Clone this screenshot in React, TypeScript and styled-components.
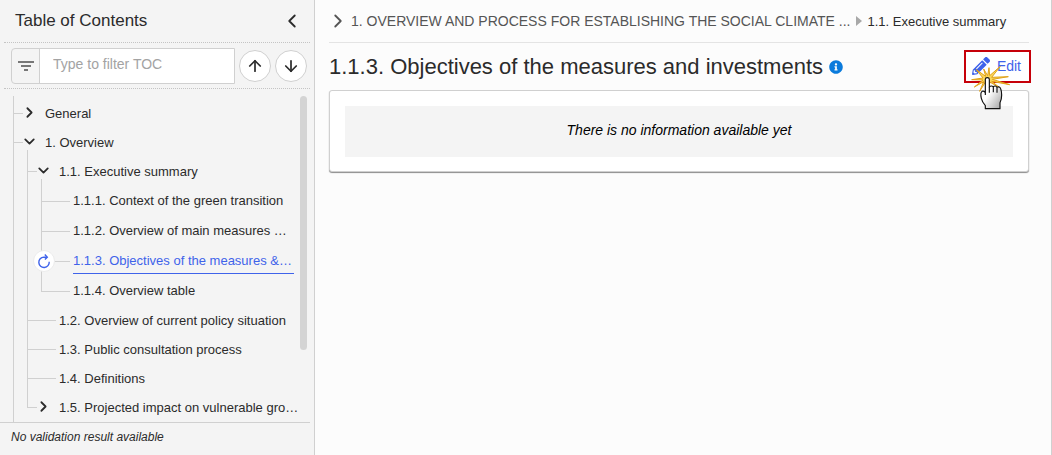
import React from 'react';
import styled, { createGlobalStyle, css } from 'styled-components';
import { ArrowDown, ArrowUp, ChevronDown, ChevronLeft, ChevronRight } from 'lucide-react';
import { FaInfoCircle, FaPencilAlt } from 'react-icons/fa';

const color = {
  text: '#2b2b2b',
  muted: '#555',
  line: '#d0d0d0',
  panel: '#f4f4f4',
  page: '#fcfcfc',
  accent: '#3f63ea',
  info: '#0b7bdc',
  alert: '#c60009',
};

const GlobalStyle = createGlobalStyle`
  *, *::before, *::after { box-sizing: border-box; }
  body {
    margin: 0;
    background: ${color.page};
    color: ${color.text};
    font-family: "Liberation Sans", Arial, sans-serif;
    font-size: 13px;
  }
  button, input { font-family: inherit; color: inherit; }
  a { color: inherit; text-decoration: none; }
`;

const Shell = styled.div`
  display: flex;
  height: 100vh;
  border-right: 1px solid ${color.line};
`;

/* ---------- Sidebar ---------- */

const Sidebar = styled.aside`
  display: flex;
  flex-direction: column;
  flex: 0 0 315px;
  min-width: 0;
  padding-right: 4px;
  background: ${color.panel};
  border-right: 1px solid ${color.line};
`;

const SidebarHeader = styled.header`
  display: flex;
  align-items: center;
  justify-content: space-between;
  height: 43px;
  margin-left: 4px;
  padding: 0 7px 0 11px;
  border-bottom: 1px dotted #c4c4c4;
`;

const SidebarTitle = styled.h2`
  margin: 0;
  font-size: 17px;
  font-weight: 400;
  line-height: 20px;
`;

const IconButton = styled.button`
  display: flex;
  padding: 0;
  border: 0;
  background: none;
`;

const FilterBar = styled.form`
  display: flex;
  align-items: center;
  gap: 4px;
  height: 46px;
  margin-left: 4px;
  padding: 0 3px 0 7px;
  border-bottom: 1px dotted #c4c4c4;
`;

const FilterField = styled.label`
  display: flex;
  flex: 1;
  min-width: 0;
  height: 36px;
  border: 1px solid ${color.line};
  border-radius: 4px 0 0 4px;
`;

const FilterIconBox = styled.span`
  display: flex;
  align-items: center;
  justify-content: center;
  flex: 0 0 28px;
  border-right: 1px solid ${color.line};
`;

const FilterInput = styled.input`
  flex: 1;
  min-width: 0;
  padding: 0 13px 3px;
  border: 0;
  background: #fff;
  font-size: 14px;
  &::placeholder { color: #a3a3a3; opacity: 1; }
`;

const RoundButton = styled.button`
  display: flex;
  align-items: center;
  justify-content: center;
  flex: 0 0 32px;
  height: 32px;
  padding: 0;
  border: 1px solid ${color.line};
  border-radius: 50%;
  background: #fff;
`;

const TreeArea = styled.nav`
  display: flex;
  flex: 1;
  min-height: 0;
  padding: 7px 3px 0 13px;
  border-bottom: 1px solid ${color.line};
`;

const RootBranch = styled.ul`
  flex: 1;
  min-width: 0;
  margin: 0;
  padding: 3px 3px 0 0;
  list-style: none;
  overflow: hidden;
  border-left: 1px solid ${color.line};
`;

const Branch = styled.ul`
  margin: -7px 0 0 13px;
  padding: 7px 0 0 1px;
  list-style: none;
  background: linear-gradient(${color.line}, ${color.line}) no-repeat 0 0 / 1px calc(100% - 14px);
`;

const Row = styled.div<{ $tall: boolean }>`
  position: relative;
  display: flex;
  align-items: center;
  height: ${(p) => (p.$tall ? 30 : 29)}px;
`;

const Connector = styled.span<{ $long: boolean }>`
  flex: 0 0 ${(p) => (p.$long ? 28 : 9)}px;
  height: 1px;
  background: ${color.line};
`;

const Toggle = styled.button`
  display: flex;
  justify-content: center;
  flex: 0 0 12px;
  min-width: 0;
  padding: 0 0 2px;
  border: 0;
  background: none;
  svg { flex: none; }
`;

const RowLink = styled.a<{ $active: boolean; $long: boolean }>`
  flex: 1;
  min-width: 0;
  margin-left: ${(p) => (p.$long ? 3 : 10)}px;
  line-height: 16px;
  white-space: nowrap;
  ${(p) =>
    p.$active &&
    css`
      margin-right: 3px;
      padding: 5px 0 4px;
      border-bottom: 1px solid ${color.accent};
      color: ${color.accent};
    `}
`;

const StatusBadge = styled.span`
  position: absolute;
  top: 4px;
  left: -9px;
  display: flex;
  align-items: center;
  justify-content: center;
  width: 22px;
  height: 22px;
  border: 1px solid #ececec;
  border-radius: 50%;
  background: #fff;
`;

const ScrollTrack = styled.div`
  flex: 0 0 7px;
`;

const ScrollThumb = styled.div`
  height: 78%;
  border-radius: 4px;
  background: #d4d4d4;
`;

const SidebarFooter = styled.footer`
  padding: 7px 11px 10px;
  font-size: 12px;
  font-style: italic;
  line-height: 15px;
`;

/* ---------- Main panel ---------- */

const Main = styled.main`
  flex: 1;
  min-width: 0;
  padding: 0 22px 0 14px;
`;

const Breadcrumb = styled.nav`
  display: flex;
  align-items: center;
  height: 43px;
  border-bottom: 1px solid #e4e4e4;
`;

const CrumbToggle = styled(Toggle)`
  flex-basis: 18px;
  padding: 0;
  color: ${color.muted};
`;

const CrumbParent = styled.a`
  margin: 0 6px 0 4px;
  font-size: 14px;
  color: ${color.muted};
  white-space: nowrap;
`;

const CrumbArrow = styled.svg`
  flex: none;
  margin-right: 4px;
`;

const CrumbCurrent = styled.a`
  white-space: nowrap;
`;

const TitleBar = styled.div`
  display: flex;
  align-items: center;
  gap: 6px;
  height: 47px;
`;

const PageTitle = styled.h1`
  margin: 0;
  font-size: 22px;
  font-weight: 400;
  line-height: 26px;
  white-space: nowrap;
`;

const EditHighlight = styled.div`
  position: relative;
  margin: 0 -2px 0 auto;
  border: 2px solid ${color.alert};
  background: #fff;
`;

const EditButton = styled.button`
  display: flex;
  align-items: center;
  gap: 7px;
  height: 29px;
  padding: 0 8px 1px 6px;
  border: 0;
  background: none;
  font-size: 14px;
  color: ${color.accent};
`;

const Pointer = styled.svg`
  position: absolute;
  top: 13px;
  left: 4px;
  pointer-events: none;
`;

const Card = styled.section`
  padding: 15px 15px 14px;
  border: 1px solid #d0d0d0;
  border-radius: 3px;
  background: #fff;
  box-shadow: 0 1px 1px rgba(0, 0, 0, 0.45);
`;

const EmptyNote = styled.p`
  margin: 0;
  padding: 15px 0 18px;
  background: ${color.panel};
  color: #000;
  font-size: 14px;
  font-style: italic;
  line-height: 18px;
  text-align: center;
`;

/* ---------- Data ---------- */

type Item = {
  label: string;
  open?: boolean;
  closed?: boolean;
  active?: boolean;
  children?: Item[];
};

const items: Item[] = [
  { label: 'General', closed: true },
  {
    label: '1. Overview',
    open: true,
    children: [
      {
        label: '1.1. Executive summary',
        open: true,
        children: [
          { label: '1.1.1. Context of the green transition' },
          { label: '1.1.2. Overview of main measures …' },
          { label: '1.1.3. Objectives of the measures &…', active: true },
          { label: '1.1.4. Overview table' },
        ],
      },
      { label: '1.2. Overview of current policy situation' },
      { label: '1.3. Public consultation process' },
      { label: '1.4. Definitions' },
      { label: '1.5. Projected impact on vulnerable gro…', closed: true },
    ],
  },
];

function TreeItem({ item, depth }: { item: Item; depth: number }) {
  const leaf = !item.open && !item.closed;
  const Chevron = item.open ? ChevronDown : ChevronRight;
  return (
    <li>
      <Row $tall={depth === 2}>
        <Connector $long={leaf} />
        {!leaf && (
          <Toggle type="button" aria-label={`Toggle ${item.label}`} aria-expanded={!!item.open}>
            <Chevron size={17} strokeWidth={2.5} />
          </Toggle>
        )}
        {item.active && (
          <StatusBadge>
            <svg width="14" height="16" viewBox="0 0 14 16" fill="none" stroke={color.accent} strokeWidth="1.4">
              <path d="M12.2 8.8A5.2 5.2 0 1 1 6.8 4.1L9.8 4.2" />
              <path d="M7.8 1.6L10.3 4.2L7.9 6.6" />
            </svg>
          </StatusBadge>
        )}
        <RowLink href="#" $active={!!item.active} $long={leaf}>
          {item.label}
        </RowLink>
      </Row>
      {item.children && (
        <Branch>
          {item.children.map((child) => (
            <TreeItem key={child.label} item={child} depth={depth + 1} />
          ))}
        </Branch>
      )}
    </li>
  );
}

function ClickPointer() {
  return (
    <Pointer width="40" height="45" viewBox="45 60 120 135" aria-hidden="true">
      <defs>
        <linearGradient id="hand" x1="0" y1="0" x2="1" y2="1">
          <stop offset="0.45" stopColor="#fff" />
          <stop offset="1" stopColor="#a0a0a0" />
        </linearGradient>
      </defs>
      <path
        d="M98 92L102 68L104 92L136 64L110 97L160 95L112 103L164 119L110 109L134 128L106 112L98 126L92 110L74 139L86 110L58 126L84 105L50 104L84 99L64 74L92 94L86 72Z"
        fill="#fbd65a"
        stroke="#e0a21a"
        strokeWidth="3"
        strokeLinejoin="round"
      />
      <path
        d="M91 103Q91 98 97 98Q103 98 103 103V127Q107 120 115 125Q121 120 126 127Q134 123 137 131Q140 138 140 150Q140 164 135 173V191H91V182Q82 172 79 160Q75 142 82 139Q86 137 91 143Z"
        fill="url(#hand)"
        stroke="#111"
        strokeWidth="3.5"
        strokeLinejoin="round"
      />
      <path d="M103 127V143M115 126V142M126 128V143M91 143V150" fill="none" stroke="#111" strokeWidth="3.5" />
    </Pointer>
  );
}

export default function App() {
  return (
    <>
      <GlobalStyle />
      <Shell>
        <Sidebar>
          <SidebarHeader>
            <SidebarTitle>Table of Contents</SidebarTitle>
            <IconButton type="button" aria-label="Collapse table of contents">
              <ChevronLeft size={22} />
            </IconButton>
          </SidebarHeader>
          <FilterBar>
            <FilterField>
              <FilterIconBox>
                <svg width="16" height="12" viewBox="0 0 16 12" fill="#777" aria-hidden="true">
                  <rect y="1" width="16" height="2" />
                  <rect x="3" y="5" width="10" height="2" />
                  <rect x="6" y="9" width="4" height="2" />
                </svg>
              </FilterIconBox>
              <FilterInput type="text" aria-label="Filter table of contents" placeholder="Type to filter TOC" />
            </FilterField>
            <RoundButton type="button" aria-label="Previous match">
              <ArrowUp size={18} strokeWidth={2.3} />
            </RoundButton>
            <RoundButton type="button" aria-label="Next match">
              <ArrowDown size={18} strokeWidth={2.3} />
            </RoundButton>
          </FilterBar>
          <TreeArea aria-label="Table of contents">
            <RootBranch>
              {items.map((item) => (
                <TreeItem key={item.label} item={item} depth={0} />
              ))}
            </RootBranch>
            <ScrollTrack>
              <ScrollThumb />
            </ScrollTrack>
          </TreeArea>
          <SidebarFooter>No validation result available</SidebarFooter>
        </Sidebar>
        <Main>
          <Breadcrumb aria-label="Breadcrumb">
            <CrumbToggle type="button" aria-label="Show full path">
              <ChevronRight size={22} />
            </CrumbToggle>
            <CrumbParent href="#">1. OVERVIEW AND PROCESS FOR ESTABLISHING THE SOCIAL CLIMATE ...</CrumbParent>
            <CrumbArrow width="7" height="10" viewBox="0 0 7 10" fill="#a8a8a8" aria-hidden="true">
              <path d="M0 0L6 5L0 10Z" />
            </CrumbArrow>
            <CrumbCurrent href="#">1.1. Executive summary</CrumbCurrent>
          </Breadcrumb>
          <TitleBar>
            <PageTitle>1.1.3. Objectives of the measures and investments</PageTitle>
            <FaInfoCircle size={14} color={color.info} />
            <EditHighlight>
              <EditButton type="button">
                <FaPencilAlt size={18} />
                Edit
              </EditButton>
              <ClickPointer />
            </EditHighlight>
          </TitleBar>
          <Card>
            <EmptyNote>There is no information available yet</EmptyNote>
          </Card>
        </Main>
      </Shell>
    </>
  );
}
